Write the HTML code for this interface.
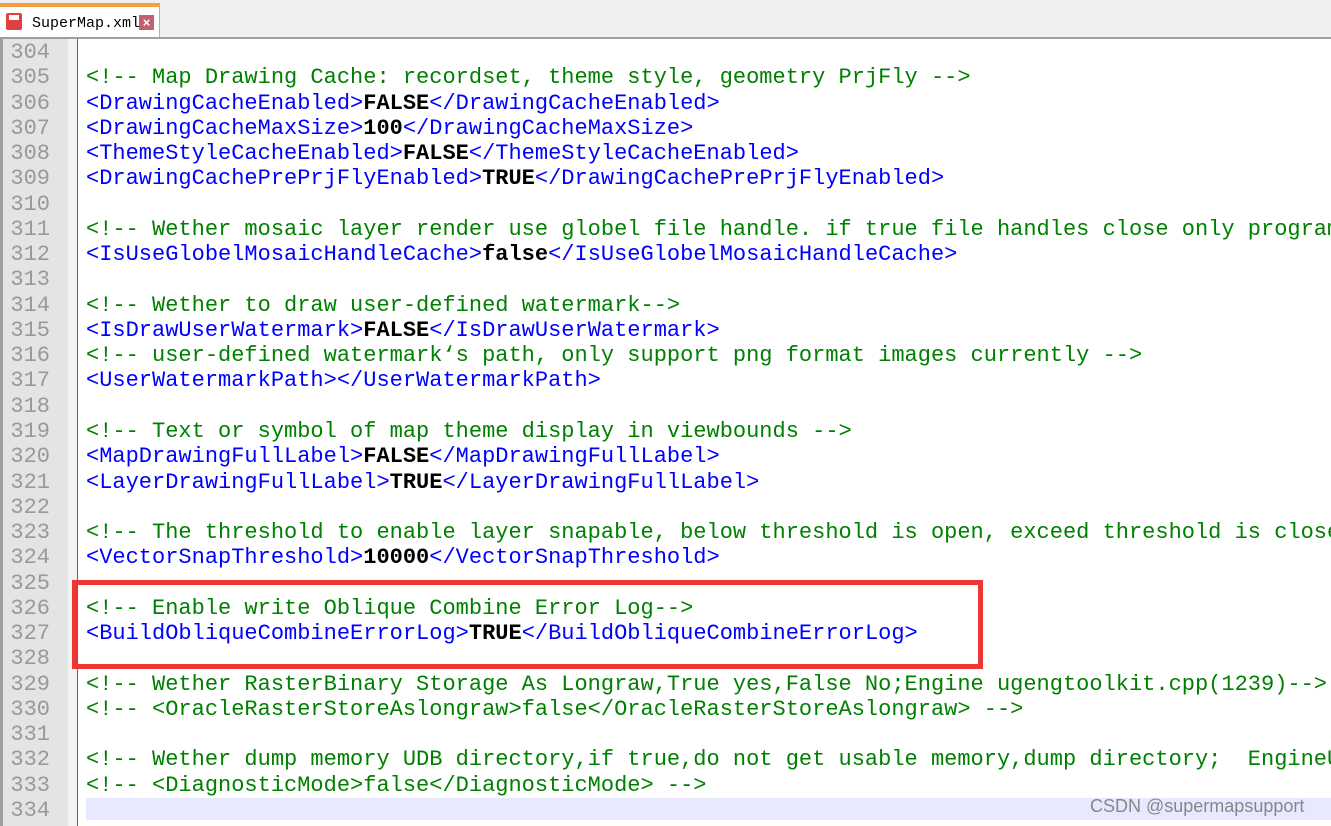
<!DOCTYPE html>
<html><head><meta charset="utf-8"><style>
body{margin:0;width:1331px;height:826px;overflow:hidden;background:#fff;position:relative;font-family:"Liberation Mono",monospace}
.tabbar{position:absolute;left:0;top:0;width:1331px;height:37px;background:#f0f0f0;border-bottom:2px solid #a0a0a0}
.tab{position:absolute;left:0;top:3px;width:160px;height:34px;background:#fff;border-top:4px solid #f5a040;border-right:1px solid #b0b0b0;box-sizing:border-box}
.tab .t{position:absolute;left:32px;top:8px;font:15px "Liberation Mono",monospace;color:#000}
.disk{position:absolute;left:6px;top:6px;width:16px;height:17px;background:#e04040;border-radius:2px}
.disk:after{content:"";position:absolute;left:3px;top:2px;width:10px;height:5px;background:#fff}
.x{position:absolute;left:139px;top:8px;width:15px;height:15px;background:#c06070;color:#fff;font:bold 13px/15px "Liberation Sans",sans-serif;text-align:center}
.gutter{position:absolute;left:0;top:39px;width:68px;height:787px;background:#e4e4e4;border-left:3px solid #a0a0a0;box-sizing:border-box}
.fold{position:absolute;left:68px;top:39px;width:9px;height:787px;background:#f4f4f4}
.redline{position:absolute;left:77px;top:39px;width:1px;height:787px;background:#e03030}
.ln,.code{position:absolute;top:40px;font-size:22px;line-height:25.27px;white-space:pre}
.ln{left:8px;width:42px;text-align:right;color:#999}
.code{left:86px}
.c{color:#008000}.g{color:#0000ff}.b{color:#000;font-weight:bold}
.hl{position:absolute;left:86px;top:798px;width:1245px;height:22px;background:#e8e8ff}
.box{position:absolute;left:72px;top:580px;width:911px;height:89px;border:5px solid #f03535;box-sizing:border-box}
.wm{position:absolute;left:1090px;top:796px;font:18px "Liberation Sans",sans-serif;color:#888}
</style></head><body>
<div class="tabbar"><div class="tab"><div class="disk"></div><span class="t">SuperMap.xml</span><div class="x">×</div></div></div>
<div class="gutter"></div><div class="fold"></div><div class="redline"></div>
<div class="hl"></div>
<div class="ln">304
305
306
307
308
309
310
311
312
313
314
315
316
317
318
319
320
321
322
323
324
325
326
327
328
329
330
331
332
333
334</div>
<div class="code">
<span class="c">&lt;!-- Map Drawing Cache: recordset, theme style, geometry PrjFly --&gt;</span>
<span class="g">&lt;DrawingCacheEnabled&gt;</span><span class="b">FALSE</span><span class="g">&lt;/DrawingCacheEnabled&gt;</span>
<span class="g">&lt;DrawingCacheMaxSize&gt;</span><span class="b">100</span><span class="g">&lt;/DrawingCacheMaxSize&gt;</span>
<span class="g">&lt;ThemeStyleCacheEnabled&gt;</span><span class="b">FALSE</span><span class="g">&lt;/ThemeStyleCacheEnabled&gt;</span>
<span class="g">&lt;DrawingCachePrePrjFlyEnabled&gt;</span><span class="b">TRUE</span><span class="g">&lt;/DrawingCachePrePrjFlyEnabled&gt;</span>

<span class="c">&lt;!-- Wether mosaic layer render use globel file handle. if true file handles close only program</span>
<span class="g">&lt;IsUseGlobelMosaicHandleCache&gt;</span><span class="b">false</span><span class="g">&lt;/IsUseGlobelMosaicHandleCache&gt;</span>

<span class="c">&lt;!-- Wether to draw user-defined watermark--&gt;</span>
<span class="g">&lt;IsDrawUserWatermark&gt;</span><span class="b">FALSE</span><span class="g">&lt;/IsDrawUserWatermark&gt;</span>
<span class="c">&lt;!-- user-defined watermark‘s path, only support png format images currently --&gt;</span>
<span class="g">&lt;UserWatermarkPath&gt;&lt;/UserWatermarkPath&gt;</span>

<span class="c">&lt;!-- Text or symbol of map theme display in viewbounds --&gt;</span>
<span class="g">&lt;MapDrawingFullLabel&gt;</span><span class="b">FALSE</span><span class="g">&lt;/MapDrawingFullLabel&gt;</span>
<span class="g">&lt;LayerDrawingFullLabel&gt;</span><span class="b">TRUE</span><span class="g">&lt;/LayerDrawingFullLabel&gt;</span>

<span class="c">&lt;!-- The threshold to enable layer snapable, below threshold is open, exceed threshold is close</span>
<span class="g">&lt;VectorSnapThreshold&gt;</span><span class="b">10000</span><span class="g">&lt;/VectorSnapThreshold&gt;</span>

<span class="c">&lt;!-- Enable write Oblique Combine Error Log--&gt;</span>
<span class="g">&lt;BuildObliqueCombineErrorLog&gt;</span><span class="b">TRUE</span><span class="g">&lt;/BuildObliqueCombineErrorLog&gt;</span>

<span class="c">&lt;!-- Wether RasterBinary Storage As Longraw,True yes,False No;Engine ugengtoolkit.cpp(1239)--&gt;</span>
<span class="c">&lt;!-- &lt;OracleRasterStoreAslongraw&gt;false&lt;/OracleRasterStoreAslongraw&gt; --&gt;</span>

<span class="c">&lt;!-- Wether dump memory UDB directory,if true,do not get usable memory,dump directory;  EngineUDB</span>
<span class="c">&lt;!-- &lt;DiagnosticMode&gt;false&lt;/DiagnosticMode&gt; --&gt;</span></div>
<div class="box"></div>
<div class="wm">CSDN @supermapsupport</div>
</body></html>
